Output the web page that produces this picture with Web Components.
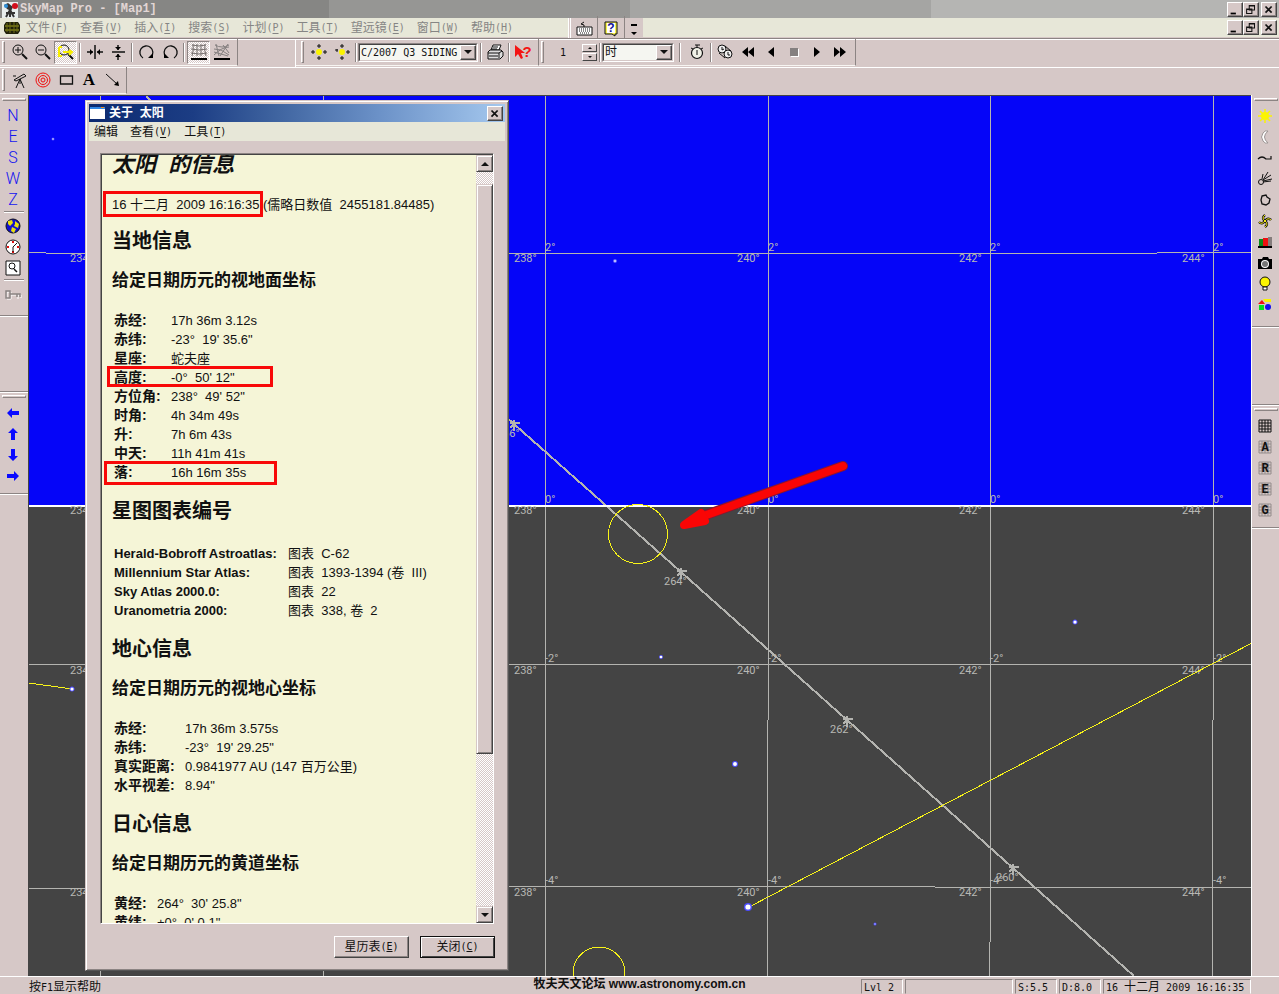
<!DOCTYPE html>
<html lang="zh-CN">
<head>
<meta charset="utf-8">
<title>SkyMap Pro - [Map1]</title>
<style>
html, body { margin: 0; height: 100%; }
body {
  --face: #d6c8c7; --light: #f7f5f2; --shadow: #8c8483; --dark: #444; --menu: #e7e7d8;
  --ui: "DejaVu Sans Mono", "Noto Sans CJK SC", monospace;
  --cjk: "Liberation Sans", "Noto Sans CJK SC", sans-serif;
  font: 12px/16px "Liberation Sans", "Noto Sans CJK SC", sans-serif;
  color: #111; background: #d6c8c7; overflow: hidden;
}
</style>
</head>
<body>
<sky-app></sky-app>
<script>
const BASE = `<style>
*{box-sizing:border-box}
button{font:inherit;color:inherit;background:none;border:0;padding:0;margin:0}
svg{display:block}
.m{font:10px/16px var(--ui)}
</style>`;
function define(name, html, setup) {
  const t = document.createElement('template');
  t.innerHTML = BASE + html;
  customElements.define(name, class extends HTMLElement {
    constructor() {
      super();
      this.attachShadow({ mode: 'open' }).append(t.content.cloneNode(true));
    }
    connectedCallback() {
      if (setup && !this.ready) { this.ready = true; setup.call(this, this.shadowRoot); }
    }
  });
}
const K = 'fill="none" stroke="#111"';
const lens = `<circle cx="6" cy="6" r="5" fill="none" stroke="#111"/><path d="M10 10l5 5" stroke="#111" stroke-width="2"/>`;
const gridBg = `<path d="M2 2h12v12H2zM5 2v12M8 2v12M11 2v12M2 5h12M2 8h12M2 11h12" fill="none" stroke="#948c8b"/>`;
const letter = c => gridBg + `<text x="8" y="12" text-anchor="middle" font-family="Liberation Mono" font-weight="700" font-size="12" fill="#111">${c}</text>`;
const compass = c => `<text x="8" y="13" text-anchor="middle" font-family="Roboto" font-weight="300" font-size="16" fill="#1414f0">${c}</text>`;
const ICONS = {
  app: `<path d="M0 0h16v16H0z" fill="#e8eeee"/><path d="M2 3l4-2 5 4-2 4-4-2z" fill="#333"/><circle cx="4" cy="4" r="2" fill="#2d8fd8"/><circle cx="13" cy="4" r="3" fill="#d20f1c"/><path d="M8 8l-4 7M8 8v7M8 8l4 7M4 11h9" stroke="#333" stroke-width="2"/>`,
  mdi: `<path d="M2 2h12l2 3v6l-2 3H2l-2-3V5z" fill="#20200a"/><path d="M1 6h14M1 10h14" stroke="#a5a51c"/><path d="M3 3v9M6 2v11M10 2v11M13 3v9" stroke="#6f6f14"/>`,
  'zoom-in': lens + `<path d="M3 6h6M6 3v6" ${K}/>`,
  'zoom-out': lens + `<path d="M3 6h6" ${K}/>`,
  'zoom-box': lens + `<path d="M1 3h3M1 3v9h3M5 8h9M11 6l3 2-3 3" fill="none" stroke="#f7ee00" stroke-width="2"/>`,
  'flip-h': `<path d="M8 1v14M0 8h6M10 8h6" stroke="#111" stroke-width="1.5"/><path d="M6 8l-3-3v6zM10 8l3-3v6z"/>`,
  'flip-v': `<path d="M2 8h13M8 1v5M8 10v6" stroke="#111" stroke-width="1.5"/><path d="M8 6L5 3h6zM8 10l-3 3h6z"/>`,
  cw: `<path d="M4 14A6.500 6.500 0 1 1 12 13" ${K} stroke-width="1.300"/><path d="M14 9v5H9z"/>`,
  ccw: `<path d="M12 14A6.500 6.500 0 1 0 4 13" ${K} stroke-width="1.300"/><path d="M2 9v5h5z"/>`,
  grid: `<path d="M1 1q7 2 14 0M0 5q8 2 16 0M0 9q8 2 16 0M2 0q1 6-1 12M6 0v12M10 0v12M14 0q-1 6 1 12" fill="none" stroke="#77706f"/><path d="M0 14h16v2H0z"/>`,
  horizon: `<path d="M1 1q7 4 14 0M0 5l7 1 8 5M0 11q8-8 15-8M2 0l3 12M6 12L14 0M9 1l6 8M0 8l14 4" fill="none" stroke="#858080"/><path d="M0 14h16v2H0z"/>`,
  center1: `<circle cx="8" cy="8" r="3" fill="#fbf400"/><path d="M0 8h4M12 8h4M8 0v4M8 12v4M2 6v4M14 6v4M6 2h4M6 14h4" ${K}/>`,
  center2: `<circle cx="8" cy="8" r="3" fill="#fbf400"/><path d="M1 6h3M12 8h4M8 0v4M8 12v4M3 5v3M14 6v4M6 2h4M6 14h4" ${K}/>`,
  printer: `<path d="M4 6l2-5h8l-2 5z" fill="#fff" stroke="#111"/><path d="M1 8l2-2h11l2 2v4l-3 3H1z" fill="#ddd" stroke="#111"/><path d="M1 9h11v5M2 12h9M12 9l3-2M6 3h5M5 5h5" ${K}/>`,
  ctxhelp: `<path d="M0 1v12l3-3 3 5 2-1-2-5h4z" fill="#f41414"/><text x="12" y="13" text-anchor="middle" font-family="Liberation Sans" font-weight="700" font-size="15" fill="#f41414">?</text>`,
  watch: `<path d="M6 1h5M8 1v3M2 4l2 1M14 4l-2 1" ${K}/><circle cx="8" cy="9" r="5.5" fill="#f1f1e7" stroke="#111" stroke-width="1.200"/><path d="M8 6v5" ${K}/>`,
  clocks: `<path d="M5 1l4 4-4 5-4-4z" fill="#eee"/><circle cx="5" cy="5" r="4" fill="#eee" stroke="#111"/><circle cx="11" cy="10" r="4" fill="#eee" stroke="#111"/><path d="M5 3v3l2-1M11 8v3h2M8 2l6 5M2 9l6 5" ${K}/>`,
  rew: `<path d="M8 3v10L2 8zM14 3v10L8 8z"/>`,
  back: `<path d="M11 3v10L5 8z"/>`,
  stop: `<path d="M5 5h8v8H5z" fill="#fff"/><path d="M4 4h8v8H4z" fill="#858080"/>`,
  play: `<path d="M5 3v10l6-5z"/>`,
  fwd: `<path d="M2 3v10l6-5zM8 3v10l6-5z"/>`,
  scope: `<path d="M2 8l10-6 2 2-10 5zM8 7l-4 9M8 7l4 9M8 7v5" fill="#d6c8c7" stroke="#111"/><path d="M1 4h3" stroke="#111"/>`,
  target: `<g fill="none" stroke="#f01010"><circle cx="8" cy="8" r="7"/><circle cx="8" cy="8" r="4.5"/><circle cx="8" cy="8" r="2"/></g>`,
  rect: `<path d="M2.500 4h12v8h-12z" fill="none" stroke="#111" stroke-width="1.300"/>`,
  text: `<text x="8" y="13" text-anchor="middle" font-family="Liberation Serif" font-weight="700" font-size="17">A</text>`,
  arrow: `<path d="M2 2l11 10" ${K}/><path d="M15 14l-5-1 4-4z"/>`,
  keyboard: `<path d="M1 7h15v8H1z" fill="#fff" stroke="#111"/><path d="M3 9h12M3 11h12M4 13h9" stroke="#111" stroke-dasharray="1 1"/><path d="M8 7V5l-3-1 3-2" ${K}/>`,
  help: `<path d="M2 2h12v12h-2v2l-3-2H2z" fill="#f8f34a" stroke="#111"/><path d="M4 3h8v10H4z" fill="#fff"/><text x="8" y="12" text-anchor="middle" font-family="Liberation Sans" font-weight="700" font-size="12" fill="#10109a">?</text>`,
  more: `<path d="M5 4h6v2H5zM5 12h6l-3 3z"/>`,
  N: compass('N'), E: compass('E'), S: compass('S'), W: compass('W'), Z: compass('Z'),
  globe: `<circle cx="8" cy="8" r="7" fill="#1010d0" stroke="#111"/><path d="M3 3l4-1 1 3-3 3-2-2zM10 3l4 3-1 4-4-2 1-2zM7 9l4 2-2 4-3-2z" fill="#e8df10"/>`,
  clock: `<circle cx="8" cy="8" r="7" fill="#fff" stroke="#111"/><path d="M8 2v2M8 12v2M2 8h2M12 8h2" stroke="#e01010" stroke-width="2"/><path d="M8 13V8l4-4" ${K}/>`,
  find: `<path d="M1 1h14v14H1z" fill="#fff" stroke="#111"/><circle cx="7" cy="6" r="3" ${K}/><path d="M9 9l3 3" stroke="#111" stroke-width="1.5"/>`,
  key: `<path d="M1 5h4v7H1zM5 8h10v3M12 8v4" fill="none" stroke="#fff" transform="translate(1 1)"/><path d="M1 5h4v7H1zM5 8h10v3M12 8v3" fill="none" stroke="#8b8483" stroke-width="1.500"/>`,
  left: `<path d="M2 8l5-5v3h7v4H7v3z" fill="#0a0aff"/>`,
  right: `<path d="M14 8L9 3v3H2v4h7v3z" fill="#0a0aff"/>`,
  up: `<path d="M8 2l5 5h-3v7H6V7H3z" fill="#0a0aff"/>`,
  down: `<path d="M8 14l5-5h-3V2H6v7H3z" fill="#0a0aff"/>`,
  sun: `<circle cx="8" cy="8" r="4" fill="#fbf400"/><path d="M8 1v14M1 8h14M3 3l10 10M13 3L3 13" stroke="#fbf400" stroke-width="1.500"/>`,
  moon: `<path d="M11 2q-7 6 0 12-3 1-5-2-3-4 0-8 2-3 5-2z" fill="#fff" stroke="#9b9493"/>`,
  orbit: `<path d="M1 9q4-4 8 0h5V6" ${K} stroke-width="1.200"/>`,
  comet: `<circle cx="4" cy="11" r="2.5" ${K}/><path d="M6 10L15 8M6 9l8-5M6 9l5-8M5 8L6 3M6 11l8-1" ${K}/>`,
  nebula: `<path d="M5 4l4-1 1 2 3 2-1 4-3 2-4-1-1-4z" fill="none" stroke="#111" stroke-width="1.3"/>`,
  galaxy: `<g fill="none" stroke="#111" stroke-width="2.4"><path d="M8 8Q4 5 8 2M8 8q3-4 6-1M8 8q4 3 0 6M8 8q-3 4-6 1"/></g><g fill="none" stroke="#f3e910"><path d="M8 8Q4 5 8 2M8 8q3-4 6-1M8 8q4 3 0 6M8 8q-3 4-6 1"/></g>`,
  books: `<path d="M1 12h14v2H1z"/><path d="M2 5h4v7H2z" fill="#0a8a1a"/><path d="M6 4h5v8H6z" fill="#ee1010"/><path d="M11 3h4v9h-4z" fill="#857d7c"/>`,
  camera: `<path d="M1 4h4l1-2h5l1 2h3v10H1z"/><circle cx="8" cy="9" r="4" fill="#fff"/><circle cx="8" cy="9" r="3" fill="#777"/>`,
  bulb: `<circle cx="8" cy="6" r="5" fill="#fbf400" stroke="#111"/><path d="M6 11h4v3H6z" fill="#fff" stroke="#111"/>`,
  shapes: `<path d="M1 7l4-4 3 4z" fill="#ee1010"/><path d="M6 2h8v3H8z" fill="#fbf400"/><path d="M2 8h5v5H2z" fill="#00e020"/><circle cx="11" cy="10" r="3" fill="#1010ee"/>`,
  table: `<path d="M2 2h12v12H2zM5 2v12M8 2v12M11 2v12M2 5h12M2 8h12M2 11h12" ${K}/>`,
  'grid-A': letter('A'), 'grid-R': letter('R'), 'grid-E': letter('E'), 'grid-G': letter('G'),
  min: `<path d="M3 11h6v2H3z"/>`,
  restore: `<path d="M6 3h6v5H6zM6 3.500h6M3 7h6v5H3zM3 7.500h6" fill="none" stroke="#111" stroke-width="1.200"/>`,
  close: `<path d="M4 4l7 7M11 4l-7 7" stroke="#111" stroke-width="2"/>`,
  window: `<path d="M0 2h15v12H0z" fill="#fff"/><path d="M0 2h15v2H0z" fill="#2f86e6"/><path d="M11 2h3v1h-3z" fill="#f28a1c"/>`
};
const icon = n => `<svg width="16" height="16" viewBox="0 0 16 16" overflow="visible" aria-hidden="true">${ICONS[n]}</svg>`;

define('tool-button', `<style>
:host{display:block;width:23px;height:23px;flex:none}
button{width:100%;height:100%;display:grid;place-items:center}
:host([pressed]) button{background:repeating-conic-gradient(#fff 0 25%,#d6c8c7 0 50%) 0 0/2px 2px;border:1px solid;border-color:var(--shadow) #fff #fff var(--shadow)}
:host([side]){height:21px;width:26px}
</style><button></button>`, function (r) {
  const b = r.querySelector('button');
  b.innerHTML = icon(this.getAttribute('icon'));
  b.setAttribute('aria-label', this.getAttribute('icon'));
});
define('tool-sep', `<style>
:host{display:block;flex:none;width:2px;height:19px;border-left:1px solid var(--shadow);border-right:1px solid #fff}
:host([side]){width:20px;height:2px;margin:1px 0 2px 4px;border:0;border-top:1px solid var(--shadow);border-bottom:1px solid #fff}
</style>`);
define('tool-band', `<style>
:host{display:flex;align-items:center;height:27px;flex:none;border-right:1px solid var(--shadow);border-bottom:1px solid var(--light);padding-left:5px}
.grip{width:3px;height:22px;flex:none;border:1px solid;border-color:#fff var(--shadow) var(--shadow) #fff}
:host([first]){padding-left:2px}
:host([side]){flex-direction:column;align-items:flex-start;height:auto;border-right:0;padding:3px 0 12px 0;border-bottom:1px solid #fff;box-shadow:inset 0 -1px var(--shadow)}
:host([side]) .grip{width:24px;height:3px;margin:0 0 4px 2px}
:host([side][lower]){padding-bottom:8px;border-top:1px solid var(--shadow);box-shadow:inset 0 1px #fff,inset 0 -1px var(--shadow)}
</style><span class="grip"></span><slot></slot>`);
define('win-controls', `<style>
:host{display:flex;flex:none;padding-right:2px}
button{width:16px;height:15px;background:var(--face);border:1px solid;border-color:#fff #444 #444 #fff;box-shadow:inset -1px -1px var(--shadow);overflow:hidden}
button:last-child{margin-left:2px}
svg{width:14px;height:14px}
:host([single]) button:not(:last-child){display:none}
</style><button aria-label="最小化">${icon('min')}</button><button aria-label="还原">${icon('restore')}</button><button aria-label="关闭">${icon('close')}</button>`);
define('menu-item', `<style>
:host{display:block;flex:none}
button{display:flex;white-space:nowrap;line-height:16px}
u{text-underline-offset:2px}
</style><button><slot></slot><span class="m"></span></button>`, function (r) {
  const k = this.getAttribute('key');
  if (k) r.querySelector('span').innerHTML = `(<u>${k}</u>)`;
});
define('win-combo', `<style>
:host{display:block;position:relative;flex:none;height:19px;border:1px solid;border-color:var(--shadow) #fff #fff var(--shadow)}
select{display:block;appearance:none;width:100%;height:17px;margin:0;padding:0 0 0 1px;border:1px solid #444;border-right-color:var(--face);border-bottom-color:var(--face);border-radius:0;background:#f5f6f1;color:#111;font:10px/15px var(--ui)}
:host([wide]) select{font:12px/15px "Liberation Sans","Noto Sans CJK SC",sans-serif}
i{position:absolute;right:1px;top:1px;width:16px;height:15px;background:var(--face);border:1px solid;border-color:#fff #444 #444 #fff;box-shadow:inset -1px -1px var(--shadow);pointer-events:none;display:grid;place-items:center}
i::after{content:"";border:4px solid transparent;border-top-color:#111;border-bottom:0}
</style><select><option></option></select><i></i>`, function (r) {
  r.querySelector('option').textContent = this.getAttribute('value');
  r.querySelector('select').setAttribute('aria-label', this.getAttribute('label'));
});
define('win-spin', `<style>
:host{display:flex;flex:none;align-items:center}
input{width:38px;height:17px;border:0;background:none;padding:0;text-align:center;font:10px/16px var(--ui);color:#111}
div{display:grid;gap:1px}
button{width:15px;height:8px;border:1px solid;border-color:#fff #444 #444 #fff;display:grid;place-items:center}
button::after{content:"";border:2px solid transparent;border-bottom-color:#111;border-top:0}
button:last-child::after{border-top:2px solid #111;border-bottom:0}
</style><input value="1" aria-label="步长"><div><button aria-label="增加"></button><button aria-label="减少"></button></div>`);

/* Sky chart: everything is placed on a free canvas in chart units. */
const meridians = [[101, 234], [323, 236], [545, 238], [768, 240], [990, 242], [1213, 244]];
const parallels = [[258, 247, '2°'], [510, 499, '0°'], [670, 658, '-2°'], [892, 880, '-4°']];
const labels = parallels.map(([y, dy, alt]) => meridians.map(([x, az]) =>
  `<text x="${x - 31}" y="${y + 4}">${az}°</text><text x="${x}" y="${dy + 4}">${alt}</text>`).join('')).join('');
const nodes = [[514, 424, 266], [681, 572, 264], [847, 720, 262], [1013, 868, 260]];
const marks = nodes.map(([x, y]) => `<path d="M${x - 4} ${y - 1}h10M${x} ${y - 4}v11M${x - 4} ${y + 4}l4-4" stroke-width="2"/>`).join('');
const nodeText = nodes.map(([x, y, n]) => `<text x="${x - 17}" y="${y + 13}">${n}°</text>`).join('');
const star = (x, y, r, c) => `<circle cx="${x}" cy="${y}" r="${r}" fill="#4c4cff"/><circle cx="${x}" cy="${y}" r="${r * .65}" fill="${c || '#fff'}"/>`;
define('sky-chart', `<style>
:host{display:block;position:relative;overflow:hidden;min-width:0;border:solid #444;border-width:1px 0 0 1px;background:#444}
.view{position:absolute;inset:0;width:100%;height:100%}
text{font:11px Roboto,sans-serif;fill:#b8b8b4}
</style><svg class="view" role="img" aria-label="星图"><g transform="translate(-29 -96)">
<rect x="29" y="96" width="100%" height="409" fill="#0505f8"/>
<g fill="none" stroke="#b4b4b0" shape-rendering="crispEdges">
<path d="M29 252.5h17M46 253.500H1157M1157 252.500H3000M29 664.500H3000M29 888.500H85M85 886.500H935M935 887.500H3000"/>
<path d="M100.500 96V3000M323.500 96V3000M545.500 96V3000M768.500 96V720M767.500 720V3000M990.500 96V942M989.500 942V3000M1213.500 96V720M1212.500 720V3000"/>
<path d="M146 96L514 424L681 572L847 720L1013 868L1134 976" stroke-width="2"/>${marks}</g>
<rect x="29" y="505" width="100%" height="2" fill="#fff"/>
${labels}${nodeText}
<g fill="none" stroke="#f8f418" shape-rendering="crispEdges"><circle cx="638" cy="534" r="29.500"/><circle cx="599" cy="973" r="26"/><path d="M751 906L1251 643.500M29 683L72 689"/></g>
${star(53, 139, 1.5, '#aaf')}${star(615, 261, 2, '#bbf')}${star(661, 657, 2)}${star(1075, 622, 2.5)}${star(735, 764, 3)}${star(748, 907, 4)}${star(875, 924, 1.5, '#88f')}${star(72, 689, 2.5)}
<path d="M843 466L700 517" stroke="#8a1530" stroke-width="10" stroke-linecap="round"/>
<path d="M843 466L698 518" stroke="#fa0505" stroke-width="8" stroke-linecap="round"/>
<path d="M684 525L701 513L705 521z" fill="#fa0505" stroke="#fa0505" stroke-width="8" stroke-linejoin="round"/>
</g></svg><slot></slot>`);

define('win-scroll', `<style>
:host{display:flex;flex-direction:column;width:17px;flex:none;background:repeating-conic-gradient(#fff 0 25%,#d6c8c7 0 50%) 0 0/2px 2px}
button,.thumb{background:var(--face);border:1px solid;border-color:var(--face) #444 #444 var(--face);box-shadow:inset 1px 1px #fff,inset -1px -1px var(--shadow)}
button{height:17px;display:grid;place-items:center}
button::after{content:"";border:4px solid transparent;border-bottom-color:#111;border-top:0}
button:last-child::after{border-top:4px solid #111;border-bottom:0}
.track{flex:1;padding-top:12px}
.thumb{height:79%}
</style><button aria-label="向上"></button><div class="track"><div class="thumb"></div></div><button aria-label="向下"></button>`);

const rows = (cls, list) => `<table class="${cls}">${list.map(([a, b]) => `<tr><th scope="row">${a}</th><td>${b}</td></tr>`).join('')}</table>`;
define('info-page', `<style>
:host{display:block;flex:1;min-width:0;overflow:hidden;background:#f5f5d7;color:#111;white-space:pre;font:13px/19px var(--cjk)}
h1,h2,h3,p{margin:0}
h1{font:italic 700 22px/20px var(--cjk);padding-left:10px;margin-bottom:20px}
p{padding-left:10px;margin-bottom:15px}
h2{font:700 20px/24px var(--cjk);padding-left:10px;margin-bottom:18px}
h3{font:700 17px/20px var(--cjk);padding-left:10px;margin-bottom:20px}
table{border-spacing:0;table-layout:fixed;width:360px;margin:0 0 17px 12px}
tr{height:19px}
th,td{padding:0;text-align:left;height:19px;line-height:19px;overflow:visible}
th{font-size:14px;width:57px}
.atlas{margin-top:-18px;padding-top:21px}
.atlas th{font-size:13px;width:174px}
.geo th{width:71px}
.helio th{width:43px}
</style><h1>太阳  的信息</h1><p>16 十二月  2009 16:16:35 (儒略日数值  2455181.84485)</p><h2>当地信息</h2><h3>给定日期历元的视地面坐标</h3>${rows('local', [['赤经:', '17h 36m 3.12s'], ['赤纬:', '-23°  19\' 35.6"'], ['星座:', '蛇夫座'], ['高度:', '-0°  50\' 12"'], ['方位角:', '238°  49\' 52"'], ['时角:', '4h 34m 49s'], ['升:', '7h 6m 43s'], ['中天:', '11h 41m 41s'], ['落:', '16h 16m 35s']])}<h2>星图图表编号</h2>${rows('atlas', [['Herald-Bobroff Astroatlas:', '图表  C-62'], ['Millennium Star Atlas:', '图表  1393-1394 (卷  III)'], ['Sky Atlas 2000.0:', '图表  22'], ['Uranometria 2000:', '图表  338, 卷  2']])}<h2>地心信息</h2><h3>给定日期历元的视地心坐标</h3>${rows('geo', [['赤经:', '17h 36m 3.575s'], ['赤纬:', '-23°  19\' 29.25"'], ['真实距离:', '0.9841977 AU (147 百万公里)'], ['水平视差:', '8.94"']])}<h2>日心信息</h2><h3>给定日期历元的黄道坐标</h3>${rows('helio', [['黄经:', '264°  30\' 25.8"'], ['黄纬:', '+0°  0\' 0.1"']])}`);

define('info-dialog', `<style>
:host{position:absolute;left:56px;top:4px;bottom:5px;width:424px;display:flex;flex-direction:column;padding:3px;background:var(--face);border:1px solid;border-color:var(--face) #555 #555 var(--face);box-shadow:inset 1px 1px #fff,inset -1px -1px var(--shadow)}
header{display:flex;align-items:center;height:18px;color:#fff;font:700 12px/18px var(--cjk);white-space:pre;background:linear-gradient(90deg,#0c2a70,#1c3d84 25%,#3f64a0 45%,#6c92c8 70%,#a5c8ee)}
header span{flex:1;padding-left:3px}
header svg{margin-left:1px}
nav{display:flex;gap:12px;height:19px;align-items:center;padding-left:5px;background:var(--menu)}
.frame{flex:1;min-height:0;display:flex;margin:12px 11px 0;border:1px solid;border-color:var(--shadow) #fff #fff var(--shadow);box-shadow:inset 1px 1px #444;padding:1px 0 0 1px}
footer{display:flex;justify-content:flex-end;gap:11px;padding:12px 10px 9px}
footer button{width:75px;height:22px;display:flex;align-items:center;justify-content:center;border:1px solid;border-color:#fff #444 #444 #fff;box-shadow:inset -1px -1px var(--shadow)}
footer button:last-child{border:1px solid #111;box-shadow:inset 1px 1px #fff,inset -1px -1px #444}
.mark{position:absolute;border:3px solid #f80808;pointer-events:none}
.date{left:17px;top:90px;width:160px;height:26px}
.alt{left:21px;top:265px;width:166px;height:21px}
.set{left:18px;top:360px;width:173px;height:24px}
</style><header>${icon('window')}<span>关于  太阳</span><win-controls single></win-controls></header>
<nav><menu-item>编辑</menu-item><menu-item key="V">查看</menu-item><menu-item key="T">工具</menu-item></nav>
<div class="frame"><info-page></info-page><win-scroll></win-scroll></div>
<footer><button>星历表<span class="m">(<u>E</u>)</span></button><button>关闭<span class="m">(<u>C</u>)</span></button></footer>
<i class="mark date"></i><i class="mark alt"></i><i class="mark set"></i>`);

define('status-bar', `<style>
:host{display:grid;grid-template-columns:1fr auto 1fr;height:18px;border-top:1px solid #fff;flex:none}
.tip{padding:2px 0 0 29px}
b{font:700 12px/14px var(--cjk)}
.panes{display:flex;justify-content:flex-end;gap:2px;padding:2px 28px 0 0}
.panes span{height:15px;padding-left:2px;border:1px solid;border-color:var(--shadow) #fff var(--face) var(--shadow);white-space:pre;line-height:15px}
.s{width:42px}.e{width:108px}.d{width:148px}
.d em{font:12px/14px var(--cjk)}
</style><span class="tip">按<span class="m">F1</span>显示帮助</span><b>牧夫天文论坛 www.astronomy.com.cn</b>
<div class="panes m"><span class="s">Lvl 2</span><span class="e"></span><span class="s">S:5.5</span><span class="s">D:8.0</span><span class="d">16 <em>十二月</em> 2009 16:16:35</span></div>`);

const tb = (...n) => n.map(i => `<tool-button icon="${i}"></tool-button>`).join('');
const sb = (...n) => n.map(i => i === '|' ? '<tool-sep side></tool-sep>' : `<tool-button side icon="${i}"></tool-button>`).join('');
const menus = [['文件', 'F'], ['查看', 'V'], ['插入', 'I'], ['搜索', 'S'], ['计划', 'P'], ['工具', 'T'], ['望远镜', 'E'], ['窗口', 'W'], ['帮助', 'H']];
define('sky-app', `<style>
:host{display:flex;flex-direction:column;height:100vh;background:var(--face)}
header{height:18px;display:flex;align-items:center;flex:none;background:linear-gradient(90deg,#868684 0 329px,#969694 329px 630px,#a5a5a3 630px 931px,#b5b5b3 931px);color:#e2d6d5;font:700 12px/18px "Liberation Mono",monospace}
header span{flex:1}
header svg{margin:1px 2px 0}
.menu{height:20px;display:flex;align-items:center;flex:none;background:var(--menu);color:#858584;border-bottom:1px solid var(--face)}
.menu svg{margin:0 6px 0 4px}
.items{display:flex;gap:12px}
.extra{display:flex;height:20px;background:var(--face);color:#111;margin-left:55px;border-left:3px double #fff;align-items:center}
.extra tool-button{width:27px;border-right:1px solid var(--shadow)}
.extra tool-button:last-child{width:18px;border:0}
.fill{flex:1}
.bar{display:flex;height:29px;flex:none;border-top:1px solid var(--shadow);box-shadow:inset 0 1px #fff}
.bar.two{height:28px;border-top:0}
.bar tool-sep{margin:0 1px 0 2px}
.bar .view tool-sep{margin:0 2px}
.view{width:238px}.object{width:243px}.time{width:317px}.draw{width:127px}
.gap{width:58px;border-right:1px solid #fff}
.pad{width:3px}
main{flex:1;min-height:0;display:grid;grid-template-columns:28px 1fr 28px}
aside{min-height:0}
aside:last-child{border-left:1px solid #fff}
.l2{margin-top:74px}.r2{margin-top:76px}
</style>
<header>${icon('app')}<span>SkyMap Pro - [Map1]</span><win-controls></win-controls></header>
<nav class="menu">${icon('mdi')}<div class="items">${menus.map(([t, k]) => `<menu-item key="${k}">${t}</menu-item>`).join('')}</div><div class="extra">${tb('keyboard', 'help', 'more')}</div><span class="fill"></span><win-controls></win-controls></nav>
<div class="bar"><tool-band first class="view"><span class="pad"></span>${tb('zoom-in', 'zoom-out')}<tool-button pressed icon="zoom-box"></tool-button><tool-sep></tool-sep>${tb('flip-h', 'flip-v')}<tool-sep></tool-sep>${tb('cw', 'ccw')}<tool-sep></tool-sep><tool-button pressed icon="grid"></tool-button>${tb('horizon')}</tool-band>
<span class="gap"></span>
<tool-band class="object"><span class="pad"></span>${tb('center1', 'center2')}<tool-sep></tool-sep><win-combo style="width:120px" value="C/2007 Q3 SIDING" label="目标"></win-combo><tool-sep></tool-sep>${tb('printer')}<tool-sep></tool-sep>${tb('ctxhelp')}</tool-band>
<tool-band first class="time"><win-spin></win-spin><tool-sep></tool-sep><win-combo wide style="width:72px" value="时" label="单位"></win-combo><span class="pad"></span><tool-sep></tool-sep><span class="pad"></span>${tb('watch')}<tool-sep></tool-sep>${tb('clocks', 'rew', 'back', 'stop', 'play', 'fwd')}</tool-band></div>
<div class="bar two"><tool-band first class="draw"><span class="pad"></span>${tb('scope', 'target', 'rect', 'text', 'arrow')}</tool-band></div>
<main><aside><tool-band side>${sb('N', 'E', 'S', 'W', 'Z', '|', 'globe', 'clock', 'find', '|', 'key')}</tool-band><tool-band side lower class="l2">${sb('left', 'up', 'down', 'right')}</tool-band></aside>
<sky-chart><info-dialog></info-dialog></sky-chart>
<aside><tool-band side>${sb('sun', 'moon', 'orbit', 'comet', 'nebula', 'galaxy', 'books', 'camera', 'bulb', 'shapes')}</tool-band><tool-band side lower class="r2">${sb('table', 'grid-A', 'grid-R', 'grid-E', 'grid-G')}</tool-band></aside></main>
<status-bar></status-bar>`);
</script>
</body>
</html>
